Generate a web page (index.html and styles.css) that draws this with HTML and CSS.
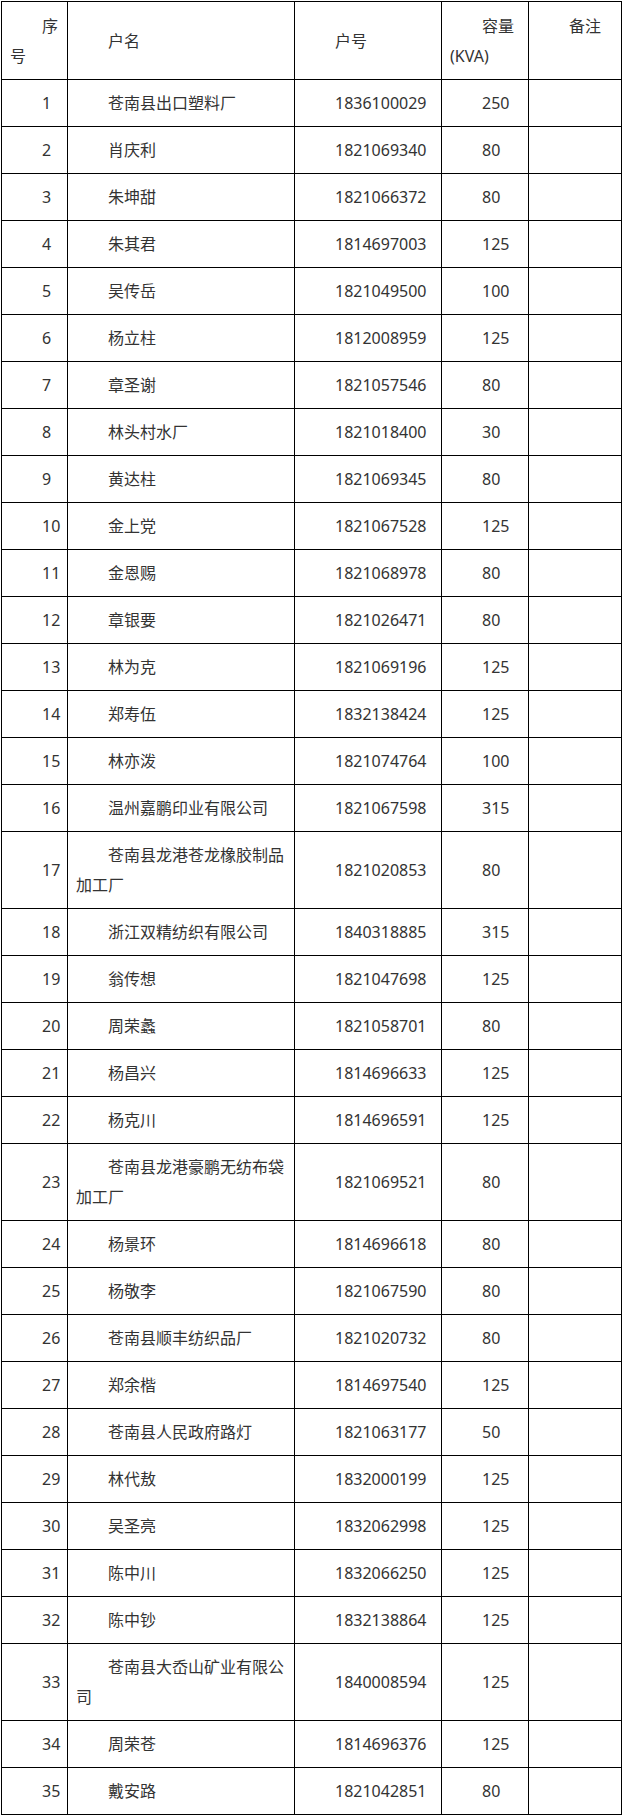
FILE: index.html
```html
<!DOCTYPE html>
<html lang="zh">
<head>
<meta charset="utf-8">
<title>户名清单</title>
<link rel="stylesheet" href="styles.css">
</head>
<body>
<table class="list">
<thead>
<tr>
<th class="c-no">序号</th>
<th class="c-name">户名</th>
<th class="c-id">户号</th>
<th class="c-cap">容量(KVA)</th>
<th class="c-note top">备注</th>
</tr>
</thead>
<tbody>
<tr><td>1</td><td>苍南县出口塑料厂</td><td>1836100029</td><td>250</td><td></td></tr>
<tr><td>2</td><td>肖庆利</td><td>1821069340</td><td>80</td><td></td></tr>
<tr><td>3</td><td>朱坤甜</td><td>1821066372</td><td>80</td><td></td></tr>
<tr><td>4</td><td>朱其君</td><td>1814697003</td><td>125</td><td></td></tr>
<tr><td>5</td><td>吴传岳</td><td>1821049500</td><td>100</td><td></td></tr>
<tr><td>6</td><td>杨立柱</td><td>1812008959</td><td>125</td><td></td></tr>
<tr><td>7</td><td>章圣谢</td><td>1821057546</td><td>80</td><td></td></tr>
<tr><td>8</td><td>林头村水厂</td><td>1821018400</td><td>30</td><td></td></tr>
<tr><td>9</td><td>黄达柱</td><td>1821069345</td><td>80</td><td></td></tr>
<tr><td>10</td><td>金上党</td><td>1821067528</td><td>125</td><td></td></tr>
<tr><td>11</td><td>金恩赐</td><td>1821068978</td><td>80</td><td></td></tr>
<tr><td>12</td><td>章银要</td><td>1821026471</td><td>80</td><td></td></tr>
<tr><td>13</td><td>林为克</td><td>1821069196</td><td>125</td><td></td></tr>
<tr><td>14</td><td>郑寿伍</td><td>1832138424</td><td>125</td><td></td></tr>
<tr><td>15</td><td>林亦泼</td><td>1821074764</td><td>100</td><td></td></tr>
<tr><td>16</td><td>温州嘉鹏印业有限公司</td><td>1821067598</td><td>315</td><td></td></tr>
<tr><td>17</td><td>苍南县龙港苍龙橡胶制品加工厂</td><td>1821020853</td><td>80</td><td></td></tr>
<tr><td>18</td><td>浙江双精纺织有限公司</td><td>1840318885</td><td>315</td><td></td></tr>
<tr><td>19</td><td>翁传想</td><td>1821047698</td><td>125</td><td></td></tr>
<tr><td>20</td><td>周荣蠡</td><td>1821058701</td><td>80</td><td></td></tr>
<tr><td>21</td><td>杨昌兴</td><td>1814696633</td><td>125</td><td></td></tr>
<tr><td>22</td><td>杨克川</td><td>1814696591</td><td>125</td><td></td></tr>
<tr><td>23</td><td>苍南县龙港豪鹏无纺布袋加工厂</td><td>1821069521</td><td>80</td><td></td></tr>
<tr><td>24</td><td>杨景环</td><td>1814696618</td><td>80</td><td></td></tr>
<tr><td>25</td><td>杨敬李</td><td>1821067590</td><td>80</td><td></td></tr>
<tr><td>26</td><td>苍南县顺丰纺织品厂</td><td>1821020732</td><td>80</td><td></td></tr>
<tr><td>27</td><td>郑余楷</td><td>1814697540</td><td>125</td><td></td></tr>
<tr><td>28</td><td>苍南县人民政府路灯</td><td>1821063177</td><td>50</td><td></td></tr>
<tr><td>29</td><td>林代敖</td><td>1832000199</td><td>125</td><td></td></tr>
<tr><td>30</td><td>吴圣亮</td><td>1832062998</td><td>125</td><td></td></tr>
<tr><td>31</td><td>陈中川</td><td>1832066250</td><td>125</td><td></td></tr>
<tr><td>32</td><td>陈中钞</td><td>1832138864</td><td>125</td><td></td></tr>
<tr><td>33</td><td>苍南县大岙山矿业有限公司</td><td>1840008594</td><td>125</td><td></td></tr>
<tr><td>34</td><td>周荣苍</td><td>1814696376</td><td>125</td><td></td></tr>
<tr><td>35</td><td>戴安路</td><td>1821042851</td><td>80</td><td></td></tr>
</tbody>
</table>
</body>
</html>
```

FILE: styles.css
```css
html, body {
  margin: 0;
  padding: 0;
  background: #fff;
}

body {
  padding: 1px 0 0 1px;
  font-family: "Noto Sans", "Noto Sans CJK SC", sans-serif;
  font-size: 16px;
  color: #333;
}

.list {
  width: 621px;
  table-layout: fixed;
  border-collapse: separate;
  border-spacing: 0;
  border-top: 1px solid #000;
  border-left: 1px solid #000;
}

.list th,
.list td {
  box-sizing: border-box;
  border-right: 1px solid #000;
  border-bottom: 1px solid #000;
  padding: 8px 8px;
  line-height: 30px;
  text-align: left;
  text-indent: 2em;
  vertical-align: middle;
  font-weight: normal;
  white-space: normal;
  word-break: normal;
}

.list th {
  padding-top: 9px;
  padding-bottom: 8px;
  height: 78px;
}

.list th.top {
  vertical-align: top;
}

.c-no { width: 66px; }
.c-name { width: 227px; }
.c-id { width: 147px; }
.c-cap { width: 87px; }
.c-note { width: 93px; }
```
